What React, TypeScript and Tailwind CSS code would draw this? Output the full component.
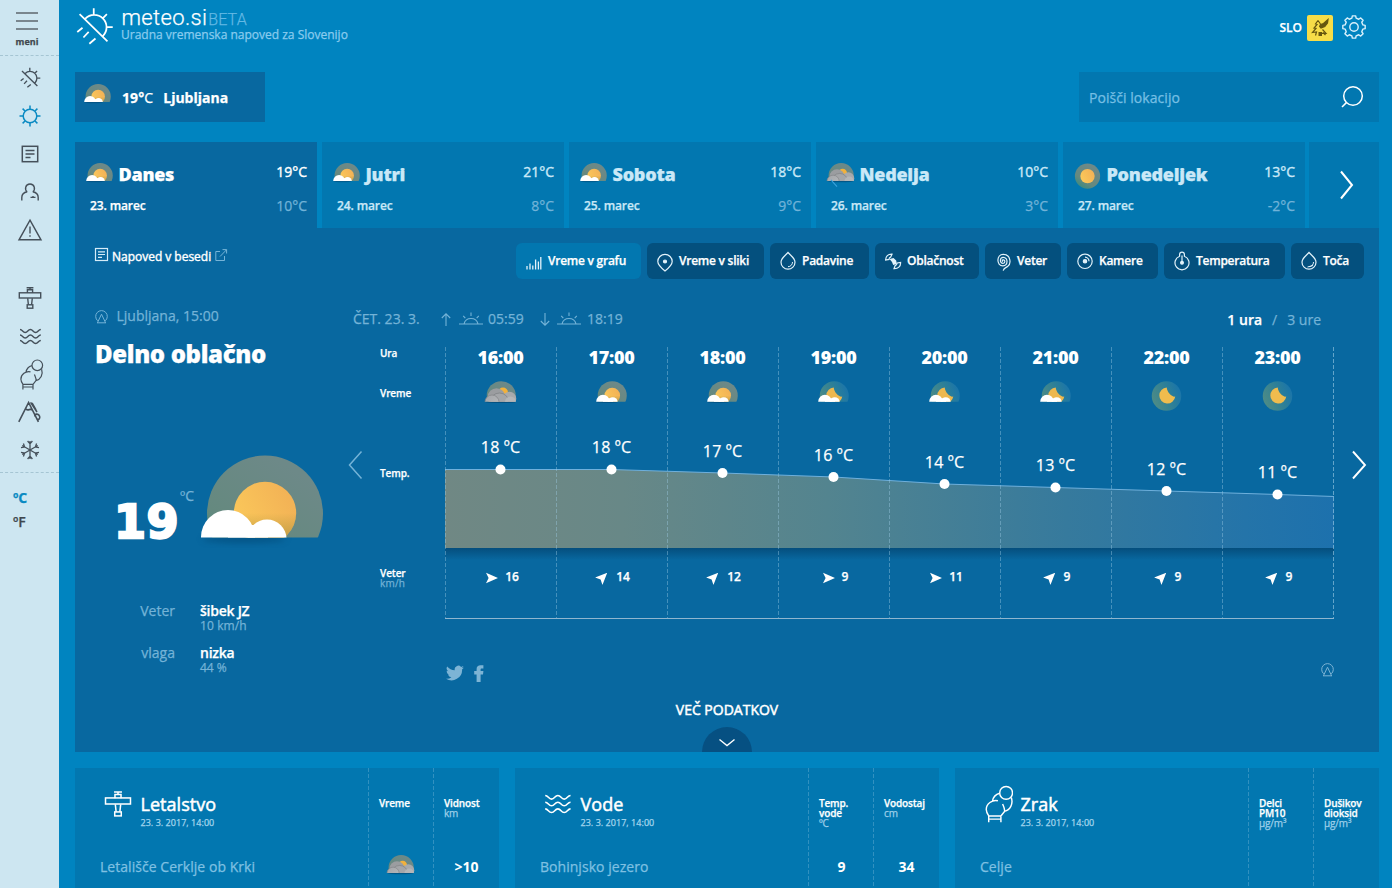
import React, { ReactNode } from 'react';

type Kind = 'partly' | 'cloudy' | 'rainy' | 'sunny' | 'moon' | 'moonCloud';

function WeatherDefs() {
  return (
    <svg width="0" height="0" className="absolute" aria-hidden="true">
      <defs>
        <linearGradient id="halo" x1="0.2" y1="0.9" x2="0.7" y2="0.1">
          <stop offset="0" stopColor="#3f8b80" />
          <stop offset="0.3" stopColor="#65897f" />
          <stop offset="1" stopColor="#6d8988" />
        </linearGradient>
        <linearGradient id="nightHalo" x1="0" y1="0.7" x2="1" y2="0.3">
          <stop offset="0" stopColor="#508c84" />
          <stop offset="0.6" stopColor="#2c7f98" />
          <stop offset="1" stopColor="#1974ab" />
        </linearGradient>
        <linearGradient id="sun" x1="0.1" y1="0.7" x2="0.9" y2="0.3">
          <stop offset="0" stopColor="#fac75a" />
          <stop offset="1" stopColor="#f3b356" />
        </linearGradient>
        <linearGradient id="sunShade" x1="0" y1="0" x2="0" y2="1">
          <stop offset="0.5" stopColor="#a8903a" stopOpacity="0" />
          <stop offset="0.9" stopColor="#a8903a" stopOpacity="0.65" />
        </linearGradient>
        <linearGradient id="greyCloud" x1="0" y1="0" x2="1" y2="1">
          <stop offset="0" stopColor="#a3a5a8" />
          <stop offset="1" stopColor="#b9bbbd" />
        </linearGradient>
        <clipPath id="horizon">
          <rect x="-5" y="-5" width="140" height="87.5" />
        </clipPath>
        <filter id="soft" x="-20%" y="-20%" width="140%" height="180%">
          <feGaussianBlur stdDeviation="3" />
        </filter>
      </defs>
    </svg>
  );
}

const MOON = 'M63 26A32 32 0 1 0 97 62C86 66 64 46 63 26Z';

function Weather({ kind, className }: { kind: Kind; className: string }) {
  const cloud = (
    <g fill="#fff">
      <circle cx="28" cy="82" r="27" />
      <circle cx="67" cy="84" r="19.5" />
      <rect x="28" y="70" width="40" height="14" />
    </g>
  );
  return (
    <svg viewBox="0 0 124 124" className={`shrink-0 overflow-visible ${className}`}>
      {kind === 'partly' && (
        <>
          <ellipse cx="44" cy="84" rx="42" ry="4" fill="#04436e" opacity="0.5" filter="url(#soft)" />
          <g clipPath="url(#horizon)">
            <circle cx="65" cy="58.5" r="58" fill="url(#halo)" />
            <circle cx="65" cy="58" r="31.2" fill="url(#sun)" />
            <circle cx="65" cy="58" r="31.2" fill="url(#sunShade)" />
            {cloud}
          </g>
        </>
      )}
      {kind === 'moonCloud' && (
        <g clipPath="url(#horizon)">
          <circle cx="65" cy="59" r="58" fill="url(#nightHalo)" />
          <path d={MOON} fill="#edb84f" />
          {cloud}
        </g>
      )}
      {(kind === 'cloudy' || kind === 'rainy') && (
        <>
          <ellipse cx="62" cy="84" rx="60" ry="4" fill="#04436e" opacity="0.6" filter="url(#soft)" />
          <g clipPath="url(#horizon)">
            <circle cx="65" cy="58.5" r="58" fill="url(#halo)" />
            <circle cx="72" cy="46" r="20" fill="#f2b13c" />
            <circle cx="98" cy="70" r="27" fill="#a7a9ac" />
            <circle cx="46" cy="64" r="35" fill="#9b9da0" />
            <circle cx="58" cy="86" r="38" fill="#a4a6a9" stroke="#7f8184" strokeWidth="3" />
            <circle cx="28" cy="84" r="28" fill="url(#greyCloud)" stroke="#85878a" strokeWidth="3" />
            <circle cx="102" cy="84" r="22" fill="#b4b6b8" />
          </g>
          {kind === 'rainy' && <path d="M18 78L46 108" stroke="#3ba3dd" strokeWidth="5" />}
        </>
      )}
      {kind === 'sunny' && (
        <>
          <circle cx="62" cy="60" r="58" fill="url(#halo)" />
          <circle cx="62" cy="60" r="33" fill="url(#sun)" />
        </>
      )}
      {kind === 'moon' && (
        <>
          <circle cx="62" cy="60" r="59" fill="url(#nightHalo)" />
          <path d={MOON} fill="#f0bc4e" />
        </>
      )}
    </svg>
  );
}

function Glyph({ w, h, sw = 1.5, className = '', children }: { w: number; h: number; sw?: number; className?: string; children: ReactNode }) {
  return (
    <svg
      width={w}
      height={h}
      viewBox={`0 0 ${w} ${h}`}
      fill="none"
      stroke="currentColor"
      strokeWidth={sw}
      className={`shrink-0 overflow-visible ${className}`}
    >
      {children}
    </svg>
  );
}

function LogoPaths() {
  return (
    <path d="M3.7 7.3L32.3 35.3M9.6 12A12.5 12.5 0 0 1 27.8 29.6M18.2 1.3V8M31.7 7.3L27.4 11.6M30.8 20.7H37.7M6.7 21.3L1.3 25.7M13 25.5L7.6 31.3M20 32.3L13.7 37.7" />
  );
}

function PlanePaths() {
  return (
    <>
      <path d="M8.6 1.8H15.4M12 1.8V3.6M9.4 7V3.8H14.6V7M9.7 12.3L10.4 18.8M14.3 12.3L13.6 18.8" />
      <rect x="1.3" y="6.8" width="21.4" height="5.2" />
      <rect x="9.2" y="18.8" width="5.6" height="3.4" />
    </>
  );
}

function WavePaths() {
  return (
    <path d="M1 4.5c2.6 0 2.6 3 5.2 3s2.6-3 5.2-3 2.6 3 5.2 3 2.6-3 5.2-3M1 10c2.6 0 2.6 3 5.2 3s2.6-3 5.2-3 2.6 3 5.2 3 2.6-3 5.2-3M1 15.5c2.6 0 2.6 3 5.2 3s2.6-3 5.2-3 2.6 3 5.2 3 2.6-3 5.2-3" />
  );
}

function AirPaths() {
  return (
    <>
      <circle cx="18.3" cy="6.3" r="5.3" />
      <path d="M13 6.6C10 7.4 7.5 9.8 7 13.2M11.5 12.8C7 11.6 1.6 15.4 1.9 20.3C2 22.8 3.2 24.2 4 25.4H14L17 21.6C17.4 19.3 16.2 17.6 15.4 15.5M22.6 10.2C24.4 15.5 21.6 20.6 17 21.6M3.9 25.4V30.6M14 25.4V30.6M4 28H14" />
    </>
  );
}

function Station({ className = '' }: { className?: string }) {
  return (
    <Glyph w={13} h={14} sw={1} className={className}>
      <path d="M2.7 10.8A5.8 5.8 0 1 1 10.3 10.8M2.4 12.8L6.5 4.2L10.6 12.8M2 12.8H11" />
    </Glyph>
  );
}

function NavSlot({ children, active }: { children: ReactNode; active?: boolean }) {
  return (
    <div className={`flex h-[38px] items-center justify-center pl-[1px] ${active ? 'text-[#0a8ac2]' : 'text-[#45505a]'}`}>
      {children}
    </div>
  );
}

function Sidebar() {
  const arms = [0, 60, 120, 180, 240, 300];
  return (
    <aside className="flex h-full w-[59px] shrink-0 flex-col bg-[#cde6f1] text-[#3f474e]">
      <div className="flex h-[56px] flex-col items-center border-b border-dashed border-[#a5c5d3] pr-[5px] pt-[12px]">
        <Glyph w={22} h={18} sw={1.6} className="text-[#5d676e]">
          <path d="M0 1H22M0 9H22M0 17H22" />
        </Glyph>
        <span className="mt-[6px] text-[9px] leading-[12px] font-bold">meni</span>
      </div>
      <nav className="mt-[3px]">
        <NavSlot>
          <svg width="21" height="21" viewBox="0 0 39 39" fill="none" stroke="currentColor" strokeWidth="2.5" className="-mt-[2px] ml-[1px]"><LogoPaths /></svg>
        </NavSlot>
        <NavSlot active>
          <Glyph w={22} h={22}>
            <circle cx="11" cy="11" r="6.8" />
            <path d="M11 0.5V4M11 18V21.5M0.5 11H4M18 11H21.5M3.6 3.6L6 6M16 16L18.4 18.4M18.4 3.6L16 6M6 16L3.6 18.4" />
          </Glyph>
        </NavSlot>
        <NavSlot>
          <Glyph w={16} h={16} sw={1.5}>
            <rect x="0.3" y="0.3" width="15.4" height="15.4" />
            <path d="M3.5 4.5H12.5M3.5 8H12.5M3.5 11.5H8.5" />
          </Glyph>
        </NavSlot>
        <NavSlot>
          <Glyph w={18} h={18} sw={1.4}>
            <path d="M6.2 8.8C3.4 6.6 4.2 1 9 1S14.6 6.6 11.8 8.8M6.2 8.8C3 9.4 0.8 11.4 0.8 14.5V17.4M11.8 8.8C15 9.4 17.2 11.4 17.2 14.5V17.4M9.5 14.4H14.5M12 12.9V14.2" />
          </Glyph>
        </NavSlot>
        <NavSlot>
          <Glyph w={24} h={22} sw={1.4}>
            <path d="M12 1.2L23 20.8H1ZM12 7.5V14.5M12 16.2V17.8" />
          </Glyph>
        </NavSlot>
      </nav>
      <nav className="mt-[30px]">
        <NavSlot>
          <Glyph w={24} h={24} sw={1.4}><PlanePaths /></Glyph>
        </NavSlot>
        <NavSlot>
          <Glyph w={23} h={23} sw={1.4}><WavePaths /></Glyph>
        </NavSlot>
        <NavSlot>
          <Glyph w={24} h={31} sw={1.2} className="ml-[2px]"><AirPaths /></Glyph>
        </NavSlot>
        <NavSlot>
          <Glyph w={24} h={24} sw={1.6}>
            <path d="M0.8 21.8L10.6 2.4L20.4 21.8M7.6 8.6C9.5 12 12.5 7.4 14.6 10.4M12.6 2.4L19 12M16.8 16.5C16.4 13.8 20.5 13 21.6 16.2C22.4 19 20.4 20 18.6 19M14 3L18 10" />
          </Glyph>
        </NavSlot>
        <NavSlot>
          <Glyph w={20} h={20} sw={1.3}>
            {arms.map((a) => (
              <path key={a} transform={`rotate(${a} 10 10)`} d="M10 10V1M7.6 1L10 3.8L12.4 1" />
            ))}
          </Glyph>
        </NavSlot>
      </nav>
      <div className="mt-[3px] flex flex-col border-t border-dashed border-[#a5c5d3] pl-[13px] pt-[13px] text-[14px] leading-[24px] font-semibold tracking-[-0.2px]">
        <span className="font-bold text-[#0a8ac2]">ºC</span>
        <span>ºF</span>
      </div>
    </aside>
  );
}

function gearPath(c: number, outer: number, inner: number, teeth: number) {
  const step = (Math.PI * 2) / teeth;
  const pts: string[] = [];
  for (let i = 0; i < teeth; i++) {
    const a = i * step;
    [
      [inner, -0.3],
      [outer, -0.19],
      [outer, 0.19],
      [inner, 0.3],
    ].forEach(([r, f]) => {
      const t = a + f * step;
      pts.push(`${(c + r * Math.cos(t)).toFixed(2)} ${(c + r * Math.sin(t)).toFixed(2)}`);
    });
  }
  return `M${pts.join('L')}Z`;
}

function Header() {
  return (
    <header className="flex h-[72px] items-start justify-between">
      <div className="flex">
        <svg width="38" height="38" viewBox="0 0 39 39" fill="none" stroke="#fff" strokeWidth="1.8" className="mt-[7px] ml-[0.5px]"><LogoPaths /></svg>
        <div className="ml-[7.5px] pt-[5px]">
          <div className="flex items-baseline pl-[0.5px] leading-[26px] font-['Roboto'] font-light">
            <span className="text-[22px] tracking-[0.35px] text-white">meteo.si</span>
            <span className="ml-[1px] text-[16px] tracking-[0.1px] text-[#63b9e4]">BETA</span>
          </div>
          <div className="-mt-[5px] text-[12px] leading-[14px] text-[#8acbee]">Uradna vremenska napoved za Slovenijo</div>
        </div>
      </div>
      <div className="flex items-center pt-[15px] pr-[13px]">
        <span className="text-[12px] leading-[26px] font-semibold text-white">SLO</span>
        <span className="ml-[5px] flex size-[26px] items-center justify-center rounded-[2px] bg-[#f7dd48]">
          <svg width="20" height="20" viewBox="0 0 20 20" fill="none" stroke="#66560f" strokeWidth="1.2">
            <path d="M8 2.5L5.5 6L7 6.5L4 10L6 10.4L2.5 14.5L6.5 14L5.5 17.5M8 2.5L10.5 6M13 14.5L15.5 17M12.5 11.5L16 15.3H12" />
            <path d="M10.5 6.5L13.5 5.5L18 1.5L17.5 5L14.8 8.6L11 10L9.6 8.4Z" fill="#66560f" />
            <path d="M8.5 14H12V18H8.5Z" fill="#66560f" stroke="none" />
          </svg>
        </span>
        <Glyph w={24} h={24} sw={1.4} className="-mt-[2px] ml-[9px] text-[#d8f0fb]">
          <path d={gearPath(12, 11.3, 9.1, 8)} strokeLinejoin="round" />
          <circle cx="12" cy="12" r="4.2" />
        </Glyph>
      </div>
    </header>
  );
}

function SearchRow() {
  return (
    <div className="flex h-[50px] justify-between">
      <div className="flex w-[190px] items-center bg-[#0868a0] pl-[9px] text-[14px] font-bold text-white">
        <Weather kind="partly" className="size-[27px]" />
        <span className="mt-[2px] ml-[11px] leading-[20px] tracking-[0.1px]">19°<span className="font-normal">C</span></span>
        <span className="mt-[2px] ml-[10px] leading-[20px]">Ljubljana</span>
      </div>
      <div className="flex w-[300px] items-center justify-between bg-[#0277b0] pr-[16px] pl-[10px]">
        <span className="mt-[2px] text-[14px] leading-[20px] tracking-[0.05px] text-[#76bfe4]">Poišči lokacijo</span>
        <Glyph w={22} h={22} sw={1.5} className="text-white">
          <circle cx="12" cy="10" r="9.3" />
          <path d="M5.4 16.6L1 21" />
        </Glyph>
      </div>
    </div>
  );
}

const DAYS: { name: string; date: string; hi: string; lo: string; kind: Kind }[] = [
  { name: 'Danes', date: '23. marec', hi: '19°C', lo: '10°C', kind: 'partly' },
  { name: 'Jutri', date: '24. marec', hi: '21°C', lo: '8°C', kind: 'partly' },
  { name: 'Sobota', date: '25. marec', hi: '18°C', lo: '9°C', kind: 'partly' },
  { name: 'Nedelja', date: '26. marec', hi: '10°C', lo: '3°C', kind: 'rainy' },
  { name: 'Ponedeljek', date: '27. marec', hi: '13°C', lo: '-2°C', kind: 'sunny' },
];

function DayTabs() {
  return (
    <div className="mt-[20px] flex h-[86px]">
      {DAYS.map((d, i) => (
        <div
          key={d.name}
          className={`mr-[5px] flex w-[242px] shrink-0 justify-between pr-[10px] pl-[11px] ${
            i === 0 ? 'bg-[#0868a0] text-white' : 'bg-[#0277b0] text-[#c9e8f7]'
          }`}
        >
          <div className="pt-[20px]">
            <div className="flex h-[27px]">
              <Weather kind={d.kind} className="mt-px size-[27px]" />
              <span className="ml-[5.5px] text-[18px] leading-[24px] font-extrabold tracking-[-0.25px]">{d.name}</span>
            </div>
            <div className="mt-[7px] ml-[4px] text-[12px] leading-[20px] font-semibold tracking-[-0.12px]">{d.date}</div>
          </div>
          <div className="flex flex-col items-end pt-[20px] text-[14px] leading-[20px]">
            <span className="[-webkit-text-stroke-width:0.4px]">{d.hi}</span>
            <span className="mt-[14px] text-[#71b3d8]">{d.lo}</span>
          </div>
        </div>
      ))}
      <div className="-ml-px flex w-[70px] items-center justify-center bg-[#0277b0] pl-[4px] text-white">
        <Glyph w={13} h={28} sw={2}><path d="M1 0.5L12 14L1 27.5" /></Glyph>
      </div>
    </div>
  );
}

const FILTERS: { label: string; w: string; icon: ReactNode }[] = [
  { label: 'Vreme v grafu', w: 'w-[125px]', icon: <path transform="translate(0 2.5)" d="M1 15V11.5M4 15V9M6.8 15V11M9.6 15V5M12.4 15V7M14.8 15V2.5" strokeWidth="1.3" /> },
  { label: 'Vreme v sliki', w: 'w-[117px]', icon: <><path d="M8 18C3.5 14.5 0.8 12 0.8 8.6A7.2 7.2 0 0 1 15.2 8.6C15.2 12 12.5 14.5 8 18Z" transform="translate(0 1)" /><circle cx="8" cy="9.5" r="1.5" fill="currentColor" /></> },
  { label: 'Padavine', w: 'w-[99px]', icon: <><path d="M8 0.5C10.5 3.5 15 6 15 10.2A7 7 0 0 1 1 10.2C1 6 5.5 3.5 8 0.5Z" /><path d="M12.5 10A4.5 4.5 0 0 1 8 14.7" strokeWidth="1" /></> },
  { label: 'Oblačnost', w: 'w-[104px]', icon: <><path d="M0.6 8C0.6 4.4 3 2 7 2.2L5.6 5.2C4.6 5.4 4 6.2 4 7.4ZM15.6 10.5C15.8 14.5 13 16.8 9 16.6L10.2 13.6C11.4 13.2 12 12.4 12.2 11Z" /><path d="M4.5 7L8.5 6L11.2 8.4L11.8 12L8.2 13L7 10Z" fill="currentColor" stroke="none" /></> },
  { label: 'Veter', w: 'w-[76px]', icon: <path d="M8 9.4C7 9.4 7 7.8 8.2 7.8C10.4 7.8 10.4 11.4 8 11.4C4.4 11.4 4.6 5.4 8.2 5.4C13.4 5.4 13.2 13.8 8 13.8C1 13.8 1.4 2.4 8.2 2.4C16 2.4 16.4 12 12.6 14.6C11 15.8 9 15.6 8.2 18.6" /> },
  { label: 'Kamere', w: 'w-[91px]', icon: <><circle cx="8" cy="9.3" r="7.2" /><circle cx="8" cy="9.3" r="1.7" fill="currentColor" /><path d="M8 5.2A4.1 4.1 0 0 1 12 9.3" /></> },
  { label: 'Temperatura', w: 'w-[121px]', icon: <><path d="M5.6 4.2V2.6A2.4 2.4 0 0 1 10.4 2.6V4.2A7 7 0 1 1 5.6 4.2Z" /><path d="M8 3.5V10" /><circle cx="8" cy="10.8" r="1.4" fill="currentColor" /></> },
  { label: 'Toča', w: 'w-[73px]', icon: <><path d="M8 0.5C10.5 3.5 15 6 15 10.2A7 7 0 0 1 1 10.2C1 6 5.5 3.5 8 0.5Z" /><path d="M12.5 10A4.5 4.5 0 0 1 8 14.7M6.5 15L12 13.5" strokeWidth="1" /></> },
];

function FilterRow() {
  return (
    <div className="flex h-[51px] items-start justify-between pt-[15px] pr-[15px] pl-[20px] text-white">
      <div className="mt-[5px] flex items-start">
        <Glyph w={13} h={14} sw={1.2} className="text-[#d5ecf8]">
          <rect x="0.5" y="0.5" width="12" height="12" />
          <path d="M3 3.8H10M3 6.5H10M3 9.3H7" />
        </Glyph>
        <span className="ml-[4px] text-[12px] leading-[18px] tracking-[-0.02px] [-webkit-text-stroke-width:0.4px]">Napoved v besedi</span>
        <Glyph w={12} h={12} sw={1} className="mt-[1px] ml-[4px] text-[#76b4d8]">
          <path d="M5 2.5H0.8V11.5H9.5V7M5 7.5L11.5 0.8M7.5 0.6H11.6V4.5" />
        </Glyph>
      </div>
      <div className="flex gap-[6px]">
        {FILTERS.map((f, i) => (
          <div key={f.label} className={`flex h-[36px] items-center rounded-[6px] pl-[10px] ${f.w} ${i === 0 ? 'bg-[#0277b0]' : 'bg-[#04507e]'}`}>
            <Glyph w={16} h={19} sw={1.2} className="text-[#e3f3fb]">{f.icon}</Glyph>
            <span className="ml-[6px] text-[12px] leading-[20px] font-semibold tracking-[-0.25px] whitespace-nowrap">{f.label}</span>
          </div>
        ))}
      </div>
    </div>
  );
}

function CurrentWeather() {
  return (
    <section className="w-[270px] shrink-0 pt-[27px] pl-[20px] text-[#74b3d7]">
      <div className="flex items-center">
        <Station className="mt-[2px]" />
        <span className="ml-[8.5px] text-[14px] leading-[20px]">Ljubljana, 15:00</span>
      </div>
      <h1 className="mt-[12px] text-[24px] leading-[32px] font-extrabold tracking-[-0.36px] text-white">Delno oblačno</h1>
      <div className="mt-[85px] flex h-[90px]">
        <span className="mt-[43px] ml-[19px] w-[66px] font-['DejaVu_Sans'] text-[46px] leading-[48px] font-bold tracking-[0.5px] text-white [-webkit-text-stroke:2.4px_#fff]">19</span>
        <span className="mt-[31px] text-[14px] leading-[20px] tracking-[-0.1px]">ºC</span>
        <Weather kind="partly" className="ml-[6.5px] size-[124px]" />
      </div>
      <dl className="mt-[57px] grid grid-cols-[80px_1fr] gap-x-[25px] gap-y-[13px] text-[14px]">
        <dt className="text-right leading-[18px]">Veter</dt>
        <dd>
          <div className="leading-[18px] font-semibold tracking-[-0.25px] text-white">šibek JZ</div>
          <div className="text-[12px] leading-[11px] tracking-[0.1px]">10 km/h</div>
        </dd>
        <dt className="text-right leading-[18px]">vlaga</dt>
        <dd>
          <div className="leading-[18px] font-semibold tracking-[-0.25px] text-white">nizka</div>
          <div className="text-[12px] leading-[11px]">44 %</div>
        </dd>
      </dl>
    </section>
  );
}

const HOURS: { t: string; kind: Kind; temp: number; y: number; wind: number; diag: boolean }[] = [
  { t: '16:00', kind: 'cloudy', temp: 18, y: 122.5, wind: 16, diag: false },
  { t: '17:00', kind: 'partly', temp: 18, y: 122.5, wind: 14, diag: true },
  { t: '18:00', kind: 'partly', temp: 17, y: 126, wind: 12, diag: true },
  { t: '19:00', kind: 'moonCloud', temp: 16, y: 130, wind: 9, diag: false },
  { t: '20:00', kind: 'moonCloud', temp: 14, y: 137, wind: 11, diag: false },
  { t: '21:00', kind: 'moonCloud', temp: 13, y: 140.5, wind: 9, diag: true },
  { t: '22:00', kind: 'moon', temp: 12, y: 144, wind: 9, diag: true },
  { t: '23:00', kind: 'moon', temp: 11, y: 147.5, wind: 9, diag: true },
];

function TemperatureArea() {
  const line = HOURS.map((h, i) => `${55.5 + i * 111} ${h.y}`).join('L');
  return (
    <svg width="889" height="271" viewBox="0 0 889 271" className="col-start-1 row-start-1">
      <defs>
        <linearGradient id="area" x1="0" x2="1" y1="0" y2="0">
          <stop offset="0" stopColor="#708884" />
          <stop offset="0.2" stopColor="#688887" />
          <stop offset="0.43" stopColor="#53848f" />
          <stop offset="0.7" stopColor="#367a9d" />
          <stop offset="0.9" stopColor="#2474a9" />
          <stop offset="1" stopColor="#1d71ad" />
        </linearGradient>
        <linearGradient id="areaShadow" x1="0" x2="0" y1="0" y2="1">
          <stop offset="0" stopColor="#03406a" stopOpacity="0.65" />
          <stop offset="1" stopColor="#03406a" stopOpacity="0" />
        </linearGradient>
      </defs>
      <rect x="0" y="201" width="889" height="12" fill="url(#areaShadow)" />
      <path d={`M0 122.5L${line}L889 149.5V201H0Z`} fill="url(#area)" />
      <path d={`M0 122.5L${line}L889 149.5`} fill="none" stroke="#6fb0dc" strokeWidth="1" />
      {HOURS.map((h, i) => (
        <circle key={h.t} cx={55.5 + i * 111} cy={h.y} r="5" fill="#fff" />
      ))}
    </svg>
  );
}

function Dash({ className }: { className: string }) {
  return (
    <div className={`w-px shrink-0 bg-[repeating-linear-gradient(to_bottom,#9fcde6_0_4px,transparent_4px_6px)] ${className}`} />
  );
}

function HourlyChart() {
  return (
    <div className="grid w-[889px] shrink-0 border-b border-[#8fb6cf]">
      <TemperatureArea />
      <div className="col-start-1 row-start-1 grid grid-cols-[repeat(8,111px)_1px]">
        {HOURS.map((h) => (
          <div key={h.t} className="flex h-[271px]">
            <Dash className="opacity-40" />
            <div className="flex w-[109px] flex-col items-center text-white">
              <span className="text-[18px] leading-[20px] font-extrabold tracking-[-0.25px] [-webkit-text-stroke-width:0px]">{h.t}</span>
              <Weather kind={h.kind} className="mt-[14px] size-[31px]" />
              <span className="text-[16px] leading-[20px] tracking-[0.15px]" style={{ marginTop: h.y - 97.5 }}>
                {h.temp} ºC
              </span>
              <div className="mt-auto mb-[31px] ml-[4px] flex items-center">
                <svg width="12" height="12" viewBox="0 0 12 12" fill="#fff" className={h.diag ? '-mt-px -rotate-45' : 'mt-px'}>
                  <path d="M0 0.8L12 6L0 11.2L2.6 6Z" />
                </svg>
                <span className="ml-[7px] text-[12px] leading-[20px] font-semibold">{h.wind}</span>
              </div>
            </div>
          </div>
        ))}
        <Dash className="opacity-60" />
      </div>
    </div>
  );
}

function Horizon() {
  return (
    <Glyph w={24} h={13} sw={1.1}>
      <path d="M0 12H24M5 12A7.2 7.2 0 0 1 19 12M12 0.5V4M4.2 3.8L6.3 6.2M19.8 3.8L17.7 6.2" />
    </Glyph>
  );
}

function HourlySection() {
  return (
    <section className="w-[1034px] text-white">
      <div className="flex h-[68px] items-start pt-[30px] text-[14px] leading-[20px] text-[#74b3d7]">
        <span className="ml-[8px] w-[88px]">ČET. 23. 3.</span>
        <Glyph w={10} h={13} sw={1.1} className="mt-[4px]"><path d="M5 13V1M0.8 5L5 0.8L9.2 5" /></Glyph>
        <span className="mt-[3px] ml-[8px]"><Horizon /></span>
        <span className="ml-[5px] w-[52px]">05:59</span>
        <Glyph w={10} h={13} sw={1.1} className="mt-[4px]"><path d="M5 0V12M0.8 8L5 12.2L9.2 8" /></Glyph>
        <span className="mt-[3px] ml-[7px]"><Horizon /></span>
        <span className="ml-[6px]">18:19</span>
        <div className="mt-px mr-[58px] ml-auto flex">
          <span className="font-semibold text-white">1 ura</span>
          <span className="mx-[10px]">/</span>
          <span>3 ure</span>
        </div>
      </div>
      <div className="flex">
        <Glyph w={14} h={28} sw={1.5} className="mt-[104px] ml-[3px] text-[#74b3d7]"><path d="M13.5 0.5L1.5 14L13.5 27.5" /></Glyph>
        <div className="ml-[18px] flex w-[65px] flex-col text-[10px] leading-[12px] font-semibold tracking-[-0.1px]">
          <span className="h-[40px]">Ura</span>
          <span className="h-[80px]">Vreme</span>
          <span className="h-[100px]">Temp.</span>
          <span className="h-[10px] leading-[12px]">Veter</span>
          <span className="font-normal tracking-[0.2px] text-[#74b3d7]">km/h</span>
        </div>
        <HourlyChart />
        <Glyph w={14} h={28} sw={1.9} className="mt-[104px] ml-[18px]"><path d="M1 0.5L13 14L1 27.5" /></Glyph>
      </div>
      <div className="mt-[45px] flex items-center pr-[45px] pl-[101px] text-[#7db4d5]">
        <svg width="18" height="18" viewBox="0 0 24 24" fill="currentColor">
          <path d="M23.9 4.6a10 10 0 0 1-2.8.8 5 5 0 0 0 2.1-2.7c-.9.5-2 1-3.1 1.2a4.9 4.9 0 0 0-8.4 4.5A14 14 0 0 1 1.6 3.2a4.9 4.9 0 0 0 1.5 6.5c-.8 0-1.6-.2-2.2-.6v.1a4.9 4.9 0 0 0 3.9 4.8c-.7.2-1.5.2-2.2.1a4.9 4.9 0 0 0 4.6 3.4A9.9 9.9 0 0 1 0 19.5 14 14 0 0 0 21.5 7.1c.9-.6 1.8-1.5 2.4-2.5z" />
        </svg>
        <svg width="10" height="17" viewBox="0 0 10 17" fill="currentColor" className="ml-[10px]">
          <path d="M2.6 17V9.4H0.2V6H2.6V4C2.6 1.4 4.2 0.2 6.5 0.2H9.4V3.4H7.9C6.9 3.4 6.6 3.8 6.6 4.6V6H9.4L9 9.4H6.6V17Z" />
        </svg>
        <Station className="-mt-[6px] ml-auto" />
      </div>
    </section>
  );
}

function ForecastPanel() {
  return (
    <div className="flex h-[524px] flex-col bg-[#0868a0]">
      <FilterRow />
      <div className="flex">
        <CurrentWeather />
        <HourlySection />
      </div>
      <div className="mt-auto flex flex-col items-center text-white">
        <span className="text-[14px] leading-[20px] [-webkit-text-stroke-width:0.5px]">VEČ PODATKOV</span>
        <div className="mt-[7px] flex h-[25px] w-[50px] justify-center rounded-t-full bg-[#065082] pt-[12px]">
          <Glyph w={16} h={7} sw={1.4}><path d="M0.5 0.5L8 6.5L15.5 0.5" /></Glyph>
        </div>
      </div>
    </div>
  );
}

interface CardCol {
  head: string[];
  unit?: string;
  value?: ReactNode;
}

function Card({ icon, title, place, cols }: { icon: ReactNode; title: string; place: string; cols: CardCol[] }) {
  return (
    <section className="flex h-[120px] w-[424px] bg-[#0277b0] text-white">
      <div className="w-[293px]">
        <div className="flex h-[87px]">
          <div className="w-[65.5px] shrink-0">{icon}</div>
          <div className="pt-[24px]">
            <div className="text-[18px] leading-[25px] tracking-[0.05px] [-webkit-text-stroke-width:0.5px]">{title}</div>
            <div className="text-[9px] leading-[12px] tracking-[0.04px] text-[#a6d6ee]">23. 3. 2017, 14:00</div>
          </div>
        </div>
        <div className="pl-[25px] text-[14px] leading-[24px] tracking-[0.04px] text-[#7fc0e2]">{place}</div>
      </div>
      {cols.map((c, i) => (
        <div key={i} className="flex w-[65px]">
          <Dash className="opacity-30" />
          <div className="w-[64px]">
            <div className="flex h-[87px] flex-col pt-[30px] pl-[10px] text-[10px] leading-[10px] font-semibold tracking-[-0.15px] whitespace-nowrap">
              {c.head.map((h) => <span key={h}>{h}</span>)}
              {c.unit && <span className="font-normal text-[#9fd0ea]">{c.unit}</span>}
            </div>
            <div className="flex justify-center pl-[1px] text-[14px] leading-[24px] font-bold [-webkit-text-stroke-width:0px]">{c.value}</div>
          </div>
        </div>
      ))}
    </section>
  );
}

export default function App() {
  return (
    <div className="flex h-[888px] w-[1392px] overflow-hidden bg-[#0084c0] font-['Open_Sans',sans-serif] [-webkit-text-stroke-width:0.25px]">
      <WeatherDefs />
      <Sidebar />
      <main className="w-[1320px] shrink-0 pl-[16px]">
        <Header />
        <SearchRow />
        <DayTabs />
        <ForecastPanel />
        <div className="mt-[16px] flex gap-[16px]">
          <Card
            title="Letalstvo"
            place="Letališče Cerklje ob Krki"
            icon={<svg width="28" height="28" viewBox="0 0 24 24" fill="none" stroke="currentColor" strokeWidth="1.3" className="mt-[22px] ml-[29px]"><PlanePaths /></svg>}
            cols={[
              { head: ['Vreme'], value: <Weather kind="cloudy" className="-ml-[3px] size-[27px]" /> },
              { head: ['Vidnost'], unit: 'km', value: '>10' },
            ]}
          />
          <Card
            title="Vode"
            place="Bohinjsko jezero"
            icon={<svg width="28" height="28" viewBox="0 0 23 23" fill="none" stroke="currentColor" strokeWidth="1.3" className="mt-[22px] ml-[29px]"><WavePaths /></svg>}
            cols={[
              { head: ['Temp.', 'vode'], unit: 'ºC', value: '9' },
              { head: ['Vodostaj'], unit: 'cm', value: '34' },
            ]}
          />
          <Card
            title="Zrak"
            place="Celje"
            icon={<svg width="29" height="38" viewBox="0 0 24 31" fill="none" stroke="currentColor" strokeWidth="1.2" className="mt-[17px] ml-[29px]"><AirPaths /></svg>}
            cols={[
              { head: ['Delci', 'PM10'], unit: 'µg/m³' },
              { head: ['Dušikov', 'dioksid'], unit: 'µg/m³' },
            ]}
          />
        </div>
      </main>
    </div>
  );
}
